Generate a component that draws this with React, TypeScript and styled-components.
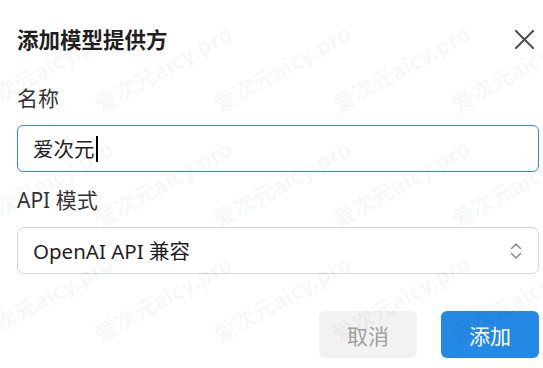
import React from "react";
import styled, { createGlobalStyle } from "styled-components";

const Global = createGlobalStyle`
  html, body { margin: 0; padding: 0; background: #ffffff; }
  body {
    font-family: "Noto Sans", "Noto Sans CJK SC", sans-serif;
    -webkit-font-smoothing: antialiased;
  }
  * { box-sizing: border-box; }
`;

const Page = styled.div`
  position: relative;
  width: 543px;
  height: 368px;
  overflow: hidden;
  background: #ffffff;
`;

const Watermarks = styled.div`
  position: absolute;
  inset: 0;
  pointer-events: none;
  z-index: 2;
  overflow: hidden;
`;

const Mark = styled.span`
  position: absolute;
  font-family: "Noto Sans CJK SC", sans-serif;
  font-weight: 700;
  font-size: 22px;
  line-height: 1;
  color: rgba(0, 0, 0, 0.04);
  white-space: nowrap;
  transform-origin: 0 100%;
  transform: rotate(-29deg);
`;

const Dialog = styled.div`
  position: relative;
  z-index: 1;
  display: flex;
  flex-direction: column;
  padding: 24px 4px 0 17px;
`;

const Header = styled.div`
  display: flex;
  align-items: center;
  justify-content: space-between;
  height: 30px;
`;

const Title = styled.h2`
  margin: 0;
  font-family: "Noto Sans CJK SC", sans-serif;
  font-size: 21.5px;
  font-weight: 700;
  line-height: 30px;
  color: #1f1f1f;
`;

const CloseButton = styled.button`
  display: flex;
  align-items: center;
  justify-content: center;
  width: 22px;
  height: 22px;
  margin-right: 4px;
  padding: 0;
  border: none;
  background: transparent;
  color: #4a4f57;
`;

const Field = styled.div<{ $top: number }>`
  display: flex;
  flex-direction: column;
  gap: 12px;
  margin-top: ${(p) => p.$top}px;
`;

const Label = styled.label`
  font-family: "Noto Sans", "Noto Sans CJK SC", sans-serif;
  font-size: 21px;
  line-height: 30px;
  color: #333333;
`;

const Box = styled.div<{ $focused?: boolean }>`
  display: flex;
  align-items: center;
  justify-content: space-between;
  height: 47px;
  padding: 0 16px 0 15px;
  border: 1.3px solid ${(p) => (p.$focused ? "#2b8be6" : "#d3d7dd")};
  border-radius: ${(p) => (p.$focused ? "6px" : "7px")};
  background: #ffffff;
  font-family: "Noto Sans", "Noto Sans CJK SC", sans-serif;
  font-size: 20.5px;
  color: #1f1f1f;
`;

const Value = styled.span`
  display: flex;
  align-items: center;
  line-height: 30px;
`;

const Caret = styled.span`
  display: inline-block;
  width: 2px;
  height: 26px;
  margin-left: 1px;
  background: #000000;
`;

const Footer = styled.div`
  display: flex;
  justify-content: flex-end;
  gap: 24px;
  margin-top: 37px;
`;

const Button = styled.button<{ $primary?: boolean }>`
  width: 98px;
  height: 47px;
  border: none;
  border-radius: 6px;
  font-family: "Noto Sans CJK SC", sans-serif;
  font-size: 21px;
  background: ${(p) => (p.$primary ? "#2489e4" : "#f2f2f2")};
  color: ${(p) => (p.$primary ? "#ffffff" : "#a0a0a0")};
`;

const marks: { x: number; y: number }[] = [];
for (let r = 0; r < 4; r++) {
  for (let c = -1; c < 5; c++) {
    marks.push({ x: -18 + c * 119, y: 92 + r * 115 });
  }
}

export default function App() {
  return (
    <Page>
      <Global />
      <Dialog>
        <Header>
          <Title>添加模型提供方</Title>
          <CloseButton aria-label="关闭">
            <svg width="19" height="19" viewBox="0 0 19 19" fill="none">
              <path d="M1 1L18 18M18 1L1 18" stroke="currentColor" strokeWidth="2" strokeLinecap="round" />
            </svg>
          </CloseButton>
        </Header>
        <Field $top={29}>
          <Label>名称</Label>
          <Box $focused>
            <Value>
              爱次元
              <Caret />
            </Value>
          </Box>
        </Field>
        <Field $top={13}>
          <Label>API 模式</Label>
          <Box>
            <Value>OpenAI API 兼容</Value>
            <svg width="12" height="18" viewBox="0 0 12 18" fill="none">
              <path d="M1.5 6.5L6 2L10.5 6.5M1.5 11.5L6 16L10.5 11.5" stroke="#8a919c" strokeWidth="1.6" strokeLinecap="round" strokeLinejoin="round" />
            </svg>
          </Box>
        </Field>
        <Footer>
          <Button>取消</Button>
          <Button $primary>添加</Button>
        </Footer>
      </Dialog>
      <Watermarks aria-hidden="true">
        {marks.map((m, i) => (
          <Mark key={i} style={{ left: m.x, top: m.y }}>
            爱次元aicy.pro
          </Mark>
        ))}
      </Watermarks>
    </Page>
  );
}
